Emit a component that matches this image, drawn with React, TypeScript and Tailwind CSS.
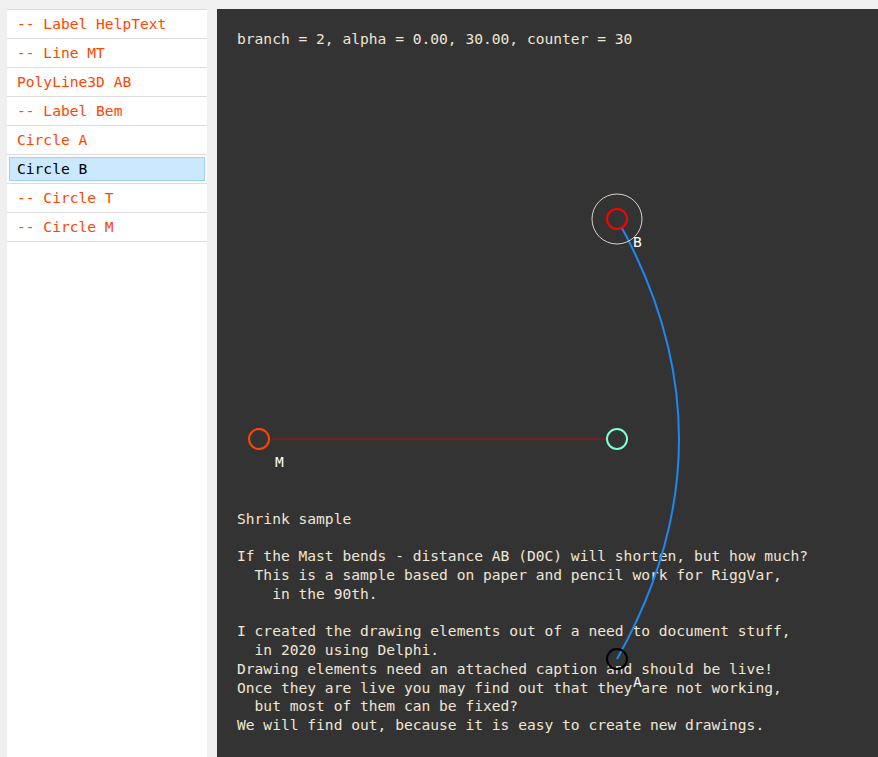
const ITEMS = [
  { label: '-- Label HelpText' },
  { label: '-- Line MT' },
  { label: 'PolyLine3D AB' },
  { label: '-- Label Bem' },
  { label: 'Circle A' },
  { label: 'Circle B', selected: true },
  { label: '-- Circle T' },
  { label: '-- Circle M' },
];

const HELP = `Shrink sample

If the Mast bends - distance AB (D0C) will shorten, but how much?
  This is a sample based on paper and pencil work for RiggVar,
    in the 90th.

I created the drawing elements out of a need to document stuff,
  in 2020 using Delphi.
Drawing elements need an attached caption and should be live!
Once they are live you may find out that they are not working,
  but most of them can be fixed?
We will find out, because it is easy to create new drawings.`;

const MONO = "font-['DejaVu_Sans_Mono','Liberation_Mono',monospace]";

function Sidebar() {
  return (
    <div className="w-[200px] shrink-0 bg-white border-t border-[#dddddd]">
      {ITEMS.map((item, i) => (
        <div key={i} className="h-[29px] border-b border-[#dddddd] px-[2px] pt-[2px] pb-[2px]">
          <div
            className={
              item.selected
                ? 'h-full flex items-center px-[7px] border border-[#99d1ff] bg-[#cce8ff] text-black'
                : 'h-full flex items-center px-[7px] border border-transparent text-[#ff4500]'
            }
          >
            {item.label}
          </div>
        </div>
      ))}
    </div>
  );
}

function Drawing() {
  return (
    <svg className="absolute inset-0 pointer-events-none" width="100%" height="100%">
      <line x1={42} y1={430} x2={400} y2={430} stroke="#7d1c1c" strokeWidth={1.5} />
      <path d="M 400 210 Q 524 430 400 650" fill="none" stroke="#1e88f0" strokeWidth={2} />
      <circle cx={400} cy={210} r={25} fill="none" stroke="#dcd2c2" strokeWidth={1} />
      <circle cx={400} cy={210} r={10} fill="#333333" stroke="#ff0000" strokeWidth={2} />
      <circle cx={42} cy={430} r={10} fill="#333333" stroke="#ff4500" strokeWidth={2} />
      <circle cx={400} cy={430} r={10} fill="#333333" stroke="#7fffd4" strokeWidth={2} />
      <circle cx={400} cy={650} r={10} fill="none" stroke="#000000" strokeWidth={2} />
      <text x={416} y={238} fill="#ffffff" fontSize={14.6} fontFamily="DejaVu Sans Mono, monospace">B</text>
      <text x={58} y={458} fill="#ffffff" fontSize={14.6} fontFamily="DejaVu Sans Mono, monospace">M</text>
      <text x={416} y={678} fill="#ffffff" fontSize={14.6} fontFamily="DejaVu Sans Mono, monospace">A</text>
    </svg>
  );
}

export default function App() {
  return (
    <div className={`h-[757px] overflow-hidden bg-[#f0f0f0] flex gap-[10px] pl-[7px] pt-[9px] text-[14.6px] leading-[18.75px] ${MONO}`}>
      <Sidebar />
      <div className="relative flex-1 bg-[#333333] text-[#efe6d4] pl-[20px] pt-[21px]">
        <div className="whitespace-pre">branch = 2, alpha = 0.00, 30.00, counter = 30</div>
        <div className="whitespace-pre mt-[461px]">{HELP}</div>
        <Drawing />
      </div>
    </div>
  );
}
